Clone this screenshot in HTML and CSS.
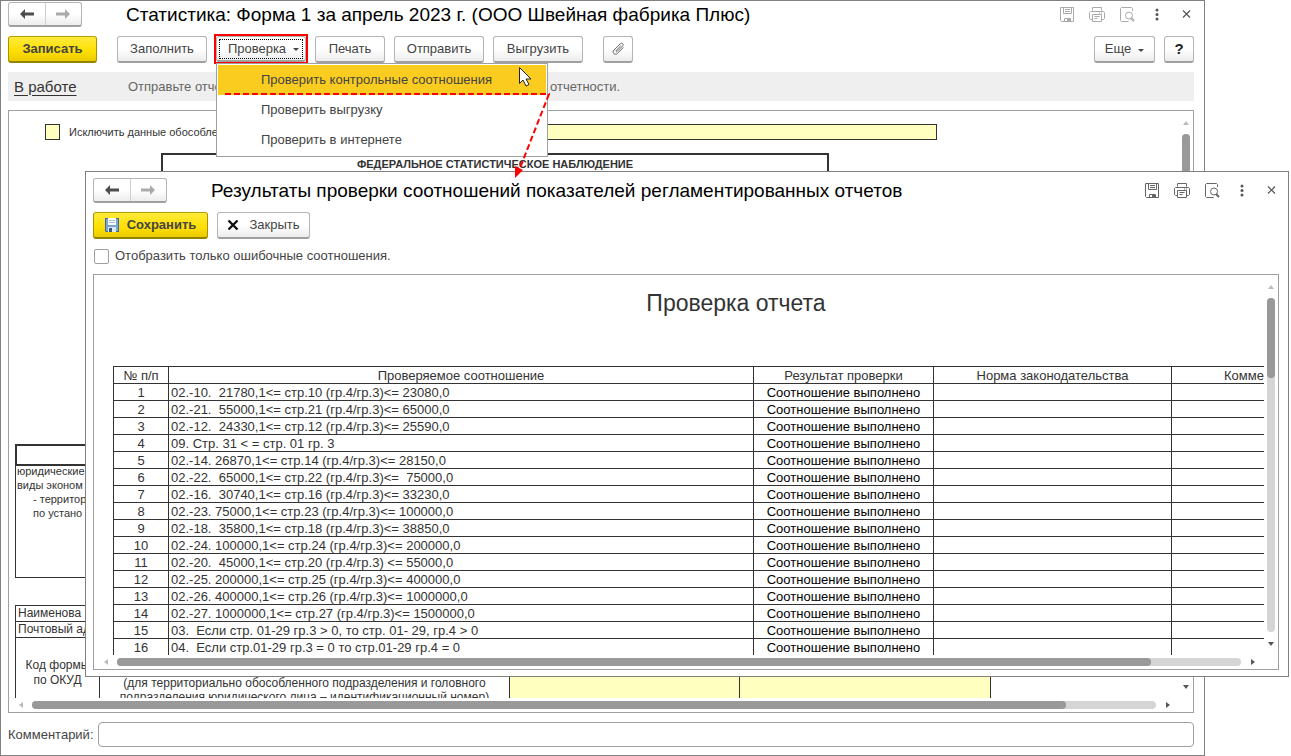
FILE: index.html
```html
<!DOCTYPE html>
<html lang="ru">
<head>
<meta charset="utf-8">
<title>Статистика: Форма 1</title>
<link rel="stylesheet" href="styles.css">
</head>
<body>
<svg class="defs" aria-hidden="true">
  <symbol id="i-left" viewBox="0 0 14 10"><path d="M0 5 5 0 5 3.5 14 3.5 14 6.5 5 6.5 5 10Z"/></symbol>
  <symbol id="i-right" viewBox="0 0 14 10"><path d="M14 5 9 0 9 3.5 0 3.5 0 6.5 9 6.5 9 10Z"/></symbol>
  <symbol id="i-save" viewBox="0 0 16 16"><g fill="none" stroke="currentColor"><path d="M1.5 .5h13v14h-12l-1-1z"/><path d="M4.500 .5v6h8v-6M6 2.500h5M6 4.500h5M5.500 14.500v-3h6v3"/></g><path d="M8 12h3v3H8z" fill="currentColor"/></symbol>
  <symbol id="i-print" viewBox="0 0 16 16"><g fill="none" stroke="currentColor"><path d="M3.500 3.500v-3h9v3M3.500 12.500h-2l-1-1v-6l1-1h13l1 1v6l-1 1h-2"/><path d="M3.500 7.500h9v7h-9zM5.500 9.500h5M5.500 11.500h3M10 6h1M12 6h1"/></g></symbol>
  <symbol id="i-view" viewBox="0 0 16 16"><g fill="none" stroke="currentColor"><path d="M13.500 4V1.500l-1-1h-10l-1 1v12l1 1h7"/><circle cx="10" cy="8.500" r="3.500"/></g><path d="M12 11l3 3" stroke="currentColor" stroke-width="2"/></symbol>
  <symbol id="i-dots" viewBox="0 0 16 16"><circle cx="8" cy="3" r="1.500"/><circle cx="8" cy="7.500" r="1.500"/><circle cx="8" cy="12" r="1.500"/></symbol>
  <symbol id="i-close" viewBox="0 0 16 16"><path d="M4 3.500l7 7M11 3.500l-7 7" stroke="currentColor" stroke-width="1.200"/></symbol>
</svg>

<main class="window main-window">
  <header class="head">
    <div class="nav">
      <button type="button" aria-label="Назад"><svg><use href="#i-left"/></svg></button>
      <button type="button" class="off" aria-label="Вперед"><svg><use href="#i-right"/></svg></button>
    </div>
    <h1 class="title">Статистика: Форма 1 за апрель 2023 г. (ООО Швейная фабрика Плюс)</h1>
    <div class="tools pale">
      <button type="button" aria-label="Сохранить"><svg><use href="#i-save"/></svg></button>
      <button type="button" aria-label="Печать"><svg><use href="#i-print"/></svg></button>
      <button type="button" aria-label="Просмотр"><svg><use href="#i-view"/></svg></button>
      <button type="button" class="dark" aria-label="Меню"><svg><use href="#i-dots"/></svg></button>
      <button type="button" class="dark" aria-label="Закрыть окно"><svg><use href="#i-close"/></svg></button>
    </div>
  </header>

  <div class="toolbar">
    <button type="button" class="btn primary write">Записать</button>
    <button type="button" class="btn">Заполнить</button>
    <div class="drop">
      <button type="button" class="btn focused" aria-expanded="true">Проверка<i class="caret"></i></button>
      <div class="menu" role="menu">
        <button type="button" role="menuitem" class="active">Проверить контрольные соотношения</button>
        <button type="button" role="menuitem">Проверить выгрузку</button>
        <button type="button" role="menuitem">Проверить в интернете</button>
      </div>
    </div>
    <button type="button" class="btn short">Печать</button>
    <button type="button" class="btn">Отправить</button>
    <button type="button" class="btn">Выгрузить</button>
    <button type="button" class="btn square clip" aria-label="Вложения"><svg viewBox="0 0 14 14"><path d="M9.800 3.800 5.200 8.400c-.7.7.2 1.800 1 1L11.400 4.200c1.800-1.800-.5-4-2.300-2.300L3 8c-2.600 2.600 1 5.800 3.400 3.400L12.500 5.300"/></svg></button>
    <button type="button" class="btn more">Еще<i class="caret"></i></button>
    <button type="button" class="btn square help">?</button>
  </div>

  <div class="status">
    <a href="#">В работе</a>
    <span class="hint">Отправьте отчет</span>
    <span>отчетности.</span>
  </div>

  <section class="sheet">
    <div class="page">
      <label class="exclude"><input type="checkbox"><span>Исключить данные обособле</span><input type="text" class="fill"></label>
      <div class="banner">ФЕДЕРАЛЬНОЕ СТАТИСТИЧЕСКОЕ НАБЛЮДЕНИЕ</div>
      <div class="providers">
        <div class="providers-head"></div>
        <p>юридические</p>
        <p>виды эконом</p>
        <p class="inset">- территор</p>
        <p class="inset">по устано</p>
      </div>
      <table class="form">
        <colgroup><col class="f1"><col class="f2"><col class="f3"><col class="f4"></colgroup>
        <tr><td colspan="4">Наименова</td></tr>
        <tr><td colspan="4">Почтовый адр</td></tr>
        <tr class="codes">
          <td class="okud">Код формы<br>по ОКУД</td>
          <td class="ident">(для территориально обособленного подразделения и головного<br>подразделения юридического лица – идентификационный номер)</td>
          <td class="yellow"></td>
          <td class="yellow"></td>
        </tr>
      </table>
    </div>
    <div class="vbar"><i class="up"></i><div class="track"><div class="thumb"></div></div><i class="down"></i></div>
    <div class="hbar"><i class="left"></i><div class="track"><div class="thumb"></div></div><i class="right"></i></div>
  </section>

  <div class="comment">
    <label for="comment">Комментарий:</label>
    <input id="comment" type="text">
  </div>
</main>

<section class="window dialog" role="dialog" aria-labelledby="dlg-title">
  <header class="head">
    <div class="nav">
      <button type="button" aria-label="Назад"><svg><use href="#i-left"/></svg></button>
      <button type="button" class="off" aria-label="Вперед"><svg><use href="#i-right"/></svg></button>
    </div>
    <h2 class="title" id="dlg-title">Результаты проверки соотношений показателей регламентированных отчетов</h2>
    <div class="tools">
      <button type="button" aria-label="Сохранить"><svg><use href="#i-save"/></svg></button>
      <button type="button" aria-label="Печать"><svg><use href="#i-print"/></svg></button>
      <button type="button" aria-label="Просмотр"><svg><use href="#i-view"/></svg></button>
      <button type="button" class="dark" aria-label="Меню"><svg><use href="#i-dots"/></svg></button>
      <button type="button" class="dark" aria-label="Закрыть окно"><svg><use href="#i-close"/></svg></button>
    </div>
  </header>
  <div class="toolbar">
    <button type="button" class="btn primary save"><svg viewBox="0 0 14 14"><path d="M0 0h14v14H1l-1-1z" fill="#46699c"/><path d="M1 1h12v12H1z" fill="#78a5d8"/><path d="M3 0h8v7H3z" fill="#fff"/><path d="M4 2h6v1H4zM4 4h6v1H4z" fill="#a9bfd6"/><path d="M3 9h8v5H3z" fill="#dce8f3"/><path d="M4 10h3v4H4z" fill="#38577f"/></svg>Сохранить</button>
    <button type="button" class="btn shut"><svg viewBox="0 0 12 12"><path d="M1.500 1.500l9 9M10.500 1.500l-9 9" stroke="#111" stroke-width="2.400"/></svg>Закрыть</button>
  </div>
  <label class="only"><input type="checkbox"><span>Отобразить только ошибочные соотношения.</span></label>
  <div class="sheet">
    <div class="page">
      <div class="report">
        <h3>Проверка отчета</h3>
        <table class="checks">
          <colgroup><col class="c1"><col class="c2"><col class="c3"><col class="c4"><col class="c5"></colgroup>
          <thead><tr><th>№ п/п</th><th>Проверяемое соотношение</th><th>Результат проверки</th><th>Норма законодательства</th><th>Комментарий</th></tr></thead>
          <tbody>
            <tr><td>1</td><td>02.-10.  21780,1&lt;= стр.10 (гр.4/гр.3)&lt;= 23080,0</td><td>Соотношение выполнено</td><td></td><td></td></tr>
            <tr><td>2</td><td>02.-21.  55000,1&lt;= стр.21 (гр.4/гр.3)&lt;= 65000,0</td><td>Соотношение выполнено</td><td></td><td></td></tr>
            <tr><td>3</td><td>02.-12.  24330,1&lt;= стр.12 (гр.4/гр.3)&lt;= 25590,0</td><td>Соотношение выполнено</td><td></td><td></td></tr>
            <tr><td>4</td><td>09. Стр. 31 &lt; = стр. 01 гр. 3</td><td>Соотношение выполнено</td><td></td><td></td></tr>
            <tr><td>5</td><td>02.-14. 26870,1&lt;= стр.14 (гр.4/гр.3)&lt;= 28150,0</td><td>Соотношение выполнено</td><td></td><td></td></tr>
            <tr><td>6</td><td>02.-22.  65000,1&lt;= стр.22 (гр.4/гр.3)&lt;=  75000,0</td><td>Соотношение выполнено</td><td></td><td></td></tr>
            <tr><td>7</td><td>02.-16.  30740,1&lt;= стр.16 (гр.4/гр.3)&lt;= 33230,0</td><td>Соотношение выполнено</td><td></td><td></td></tr>
            <tr><td>8</td><td>02.-23. 75000,1&lt;= стр.23 (гр.4/гр.3)&lt;= 100000,0</td><td>Соотношение выполнено</td><td></td><td></td></tr>
            <tr><td>9</td><td>02.-18.  35800,1&lt;= стр.18 (гр.4/гр.3)&lt;= 38850,0</td><td>Соотношение выполнено</td><td></td><td></td></tr>
            <tr><td>10</td><td>02.-24. 100000,1&lt;= стр.24 (гр.4/гр.3)&lt;= 200000,0</td><td>Соотношение выполнено</td><td></td><td></td></tr>
            <tr><td>11</td><td>02.-20.  45000,1&lt;= стр.20 (гр.4/гр.3) &lt;= 55000,0</td><td>Соотношение выполнено</td><td></td><td></td></tr>
            <tr><td>12</td><td>02.-25. 200000,1&lt;= стр.25 (гр.4/гр.3)&lt;= 400000,0</td><td>Соотношение выполнено</td><td></td><td></td></tr>
            <tr><td>13</td><td>02.-26. 400000,1&lt;= стр.26 (гр.4/гр.3)&lt;= 1000000,0</td><td>Соотношение выполнено</td><td></td><td></td></tr>
            <tr><td>14</td><td>02.-27. 1000000,1&lt;= стр.27 (гр.4/гр.3)&lt;= 1500000,0</td><td>Соотношение выполнено</td><td></td><td></td></tr>
            <tr><td>15</td><td>03.  Если стр. 01-29 гр.3 &gt; 0, то стр. 01- 29, гр.4 &gt; 0</td><td>Соотношение выполнено</td><td></td><td></td></tr>
            <tr><td>16</td><td>04.  Если стр.01-29 гр.3 = 0 то стр.01-29 гр.4 = 0</td><td>Соотношение выполнено</td><td></td><td></td></tr>
          </tbody>
        </table>
      </div>
    </div>
    <div class="vbar"><i class="up"></i><div class="track"><div class="thumb"></div></div><i class="down"></i></div>
    <div class="hbar"><i class="left"></i><div class="track"><div class="thumb"></div></div><i class="right"></i></div>
  </div>
</section>

<svg class="pointer" viewBox="0 0 340 120" aria-hidden="true">
  <path d="M9 34H334" fill="none" stroke="red" stroke-width="2" stroke-dasharray="6 3"/>
  <path d="M333 34L304 108" fill="none" stroke="red" stroke-width="2" stroke-dasharray="6 3"/>
  <path d="M299 118v-12l8 4z" fill="red"/>
  <path d="M303.500 7.500v16l3.500-3.500 3 6 3-1.500-3-5.500h5z" fill="#fff" stroke="#222"/>
</svg>
</body>
</html>
```
FILE: styles.css
```css
* { box-sizing: border-box; }
body {
  margin: 0;
  position: relative;
  height: 100vh;
  overflow: hidden;
  background: #fff;
  color: #444;
  font: 13px/16px "Liberation Sans", Arial, sans-serif;
}
button, input { font: inherit; color: inherit; margin: 0; padding: 0; }
.defs { position: absolute; width: 0; height: 0; }

.window {
  display: flex;
  flex-direction: column;
  background: #fff;
  border: 1px solid #808080;
}
.main-window { height: 100%; margin-right: 86px; padding: 1px 10px 8px 7px; }
.dialog { position: absolute; left: 85px; right: 2px; top: 171px; bottom: 79px; padding: 6px 9px 6px 7px; }

.head { display: flex; align-items: center; height: 25px; flex: none; }
.nav {
  display: flex;
  width: 74px;
  height: 25px;
  border: 1px solid #b4b4b4;
  border-bottom: 2px solid #a0a0a0;
  border-radius: 3px;
  background: linear-gradient(#fff 50%, #ececec);
}
.nav button { flex: 1; border: 0; background: none; display: grid; place-items: center; fill: #4d4d4d; }
.nav .off { border-left: 1px solid #d0d0d0; fill: #aaa; }
.nav svg { width: 14px; height: 10px; }
.title { flex: 1; margin: 0 0 0 44px; font-size: 19px; line-height: 24px; font-weight: 400; color: #000; white-space: nowrap; }
.tools { display: flex; margin-right: -8px; color: #666; }
.tools.pale { color: #aaa; }
.tools .dark { color: #555; }
.tools button { width: 30px; height: 24px; border: 0; background: none; display: grid; place-items: center; }
.tools svg { width: 16px; height: 16px; fill: currentColor; }

.toolbar { display: flex; gap: 9px; margin-top: 9px; flex: none; }
.btn {
  width: 90px;
  height: 27px;
  display: flex;
  align-items: center;
  justify-content: center;
  border: 1px solid #b4b4b4;
  border-bottom: 2px solid #a0a0a0;
  border-radius: 3px;
  background: linear-gradient(#fff 50%, #ececec);
  white-space: nowrap;
}
.primary {
  background: linear-gradient(#ffea3c, #fddf00 60%, #ebcb00);
  border-color: #b8a000 #a89200 #958200;
  font-weight: 700;
}
.write { width: 89px; margin-right: 11px; }
.short { width: 70px; }
.square { width: 30px; }
.clip { margin-left: 11px; }
.clip svg { width: 14px; height: 14px; fill: none; stroke: #666; }
.more { width: 61px; margin-left: auto; }
.help { font-weight: 700; font-size: 15px; color: #222; }
.caret { margin: 2px 0 0 7px; border: 3px solid transparent; border-top-color: #444; border-bottom: 0; }
.more .caret { margin-left: 7px; }
.drop { position: relative; height: 26px; outline: 2px solid red; }
.focused { height: 26px; outline: 1px dotted #000; outline-offset: -4px; }
.focused .caret { margin-right: -5px; }
.menu {
  position: absolute;
  z-index: 2;
  top: 27px;
  left: 0;
  width: 332px;
  padding: 1px;
  border: 1px solid #a0a0a0;
  background: #fff;
}
.menu button { display: block; width: 100%; height: 30px; padding-left: 43px; border: 0; background: none; text-align: left; }
.menu .active { background: #facc20; }
.save { width: 115px; gap: 8px; }
.save svg { width: 14px; height: 14px; }
.shut { width: 93px; gap: 10px; }
.shut svg { width: 12px; height: 12px; }

.status { display: flex; align-items: center; height: 29px; flex: none; margin-top: 9px; padding-left: 6px; background: #efefef; color: #666; }
.status a { width: 114px; color: #333; font-size: 15px; text-underline-offset: 3px; }
.status .hint { width: 422px; }

.sheet {
  flex: 1;
  min-height: 0;
  margin-top: 9px;
  display: grid;
  grid-template: minmax(0, 1fr) 14px / minmax(0, 1fr) 14px;
  border: 1px solid #a0a0a0;
}
.page { overflow: hidden; color: #333; }
.vbar, .hbar { display: flex; align-items: center; }
.vbar { flex-direction: column; }
.vbar i, .hbar i { width: 23px; height: 23px; display: grid; place-items: center; flex: none; }
.hbar i { height: 14px; }
.vbar i { width: 14px; }
.vbar i::before, .hbar i::before { content: ""; border: 3px solid transparent; }
.up::before { border-bottom-color: #bbb !important; border-bottom-width: 4px !important; border-top: 0 !important; }
.down::before { border-top-color: #555 !important; border-top-width: 4px !important; border-bottom: 0 !important; }
.left::before { border-right-color: #bbb !important; border-right-width: 4px !important; border-left: 0 !important; }
.right::before { border-left-color: #555 !important; border-left-width: 4px !important; border-right: 0 !important; }
.track { flex: 1; border-radius: 4px; background: #d5d5d5; }
.thumb { border-radius: 4px; background: #999; }
.vbar .track { width: 8px; }
.vbar .thumb { height: 24%; }
.hbar .track { height: 8px; }
.hbar .thumb { width: 92%; height: 8px; }

.exclude { display: flex; align-items: center; width: 928px; padding: 13px 0 0 36px; font-size: 11px; line-height: 16px; }
.exclude input { appearance: none; border: 1px solid #333; border-radius: 0; background: #ffffc0; }
.exclude input[type="checkbox"] { width: 15px; height: 16px; margin-right: 9px; }
.exclude span { width: 151px; white-space: nowrap; }
.exclude .fill { flex: 1; min-width: 0; height: 16px; }
.banner { width: 668px; height: 60px; margin: 13px 0 0 152px; padding-top: 1px; border: 2px solid #333; font-size: 11px; font-weight: 700; text-align: center; }
.providers { width: 900px; height: 134px; margin: 231px 0 0 6px; border: 1px solid #333; font-size: 11px; line-height: 14px; }
.providers-head { height: 22px; margin: -1px -1px -2px; border: 2px solid #333; }
.providers p { margin: 0 0 0 1px; }
.providers .inset { margin-left: 17px; }
.form { table-layout: fixed; width: 976px; margin: 27px 0 0 6px; border-collapse: collapse; font-size: 12px; line-height: 15px; }
.form td { height: 16px; padding: 0 2px; border: 1px solid #333; }
.f1 { width: 84px; }
.f2 { width: 410px; }
.f3 { width: 230px; }
.form .codes td { height: 84px; line-height: 14px; text-align: center; }
.form .codes .okud { line-height: 15px; padding-bottom: 14px; }
.form .codes .ident { padding-top: 20px; white-space: nowrap; }
.yellow { background: #ffffc0; }

.comment { display: flex; align-items: center; gap: 4px; flex: none; margin-top: 9px; }
.comment input { flex: 1; height: 25px; border: 1px solid #a0a0a0; border-radius: 4px; background: #fff; }

.only { display: flex; align-items: center; gap: 6px; margin-top: 9px; padding-left: 1px; flex: none; }
.only input { appearance: none; width: 15px; height: 15px; border: 1px solid #a0a0a0; border-radius: 2px; }
.dialog .only + .sheet { margin-top: 10px; }
.report { width: 1265px; padding-left: 19px; }
.report h3 { margin: 0; padding: 14px 0 49px; font-size: 23px; line-height: 28px; font-weight: 400; text-align: center; }
.checks { table-layout: fixed; width: 1246px; border-collapse: collapse; line-height: 15px; }
.checks th, .checks td { height: 17px; padding: 1px 2px 0; border: 1px solid #333; font-weight: 400; white-space: pre; text-align: center; }
.checks td:nth-child(2) { text-align: left; }
.checks td:nth-child(3) { color: #000; }
.c1 { width: 55px; }
.c2 { width: 585px; }
.c3 { width: 180px; }
.c4 { width: 238px; }

.pointer { position: absolute; z-index: 5; left: 216px; top: 60px; width: 340px; height: 120px; pointer-events: none; }
```
